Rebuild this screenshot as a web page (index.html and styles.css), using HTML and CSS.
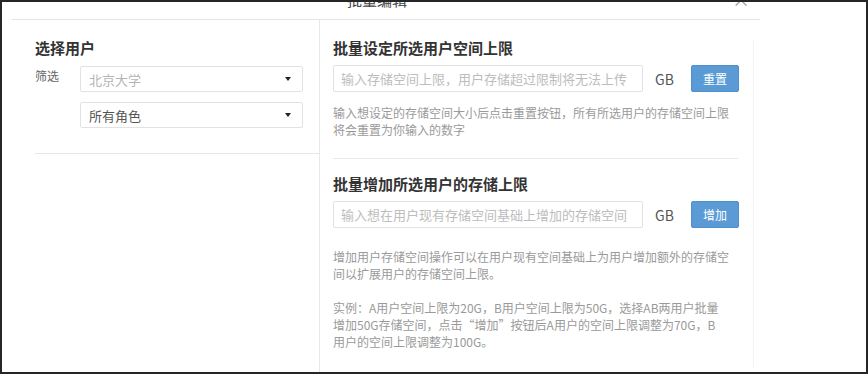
FILE: index.html
```html
<!DOCTYPE html>
<html lang="zh-CN">
<head>
<meta charset="utf-8">
<title>批量编辑</title>
<link rel="stylesheet" href="styles.css">
</head>
<body>
<div class="screen">
  <div class="modal">
    <div class="header">
      <span class="header-title">批量编辑</span>
      <span class="close">×</span>
    </div>
    <div class="body">
      <div class="left">
        <div class="sec-title">选择用户</div>
        <div class="filter">
          <span class="label">筛选</span>
          <div class="select placeholder"><span>北京大学</span><i class="caret"></i></div>
          <span></span>
          <div class="select"><span>所有角色</span><i class="caret"></i></div>
        </div>
        <div class="left-divider"></div>
      </div>
      <div class="right">
        <div class="sec-title">批量设定所选用户空间上限</div>
        <div class="row">
          <div class="input">输入存储空间上限，用户存储超过限制将无法上传</div>
          <span class="unit">GB</span>
          <span class="btn">重置</span>
        </div>
        <p class="desc first">输入想设定的存储空间大小后点击重置按钮，所有所选用户的存储空间上限<br>将会重置为你输入的数字</p>
        <div class="divider"></div>
        <div class="sec-title second">批量增加所选用户的存储上限</div>
        <div class="row">
          <div class="input">输入想在用户现有存储空间基础上增加的存储空间</div>
          <span class="unit">GB</span>
          <span class="btn">增加</span>
        </div>
        <p class="desc second-desc">增加用户存储空间操作可以在用户现有空间基础上为用户增加额外的存储空<br>间以扩展用户的存储空间上限。</p>
        <p class="desc example">实例：A用户空间上限为20G，B用户空间上限为50G，选择AB两用户批量<br>增加50G存储空间，点击“增加”按钮后A用户的空间上限调整为70G，B<br>用户的空间上限调整为100G。</p>
      </div>
    </div>
  </div>
</div>
</body>
</html>
```

FILE: styles.css
```css
html, body {
  margin: 0;
  padding: 0;
  background: #262626;
}

.screen {
  width: 868px;
  height: 374px;
  box-sizing: border-box;
  border: 2px solid #262626;
  background: #ffffff;
  overflow: hidden;
  font-family: "Noto Sans CJK SC", "Noto Sans", "Liberation Sans", sans-serif;
  color: #333;
}

.modal {
  margin-left: 10px;
  width: 748px;
  height: 100%;
}

.header {
  height: 17px;
  border-bottom: 1px solid #e4e4e4;
  display: flex;
  align-items: flex-end;
  overflow: hidden;
}

.header-title {
  margin-left: 335px;
  margin-bottom: 12px;
  font-size: 15px;
  line-height: 15px;
  color: #444;
  width: 60px;
  white-space: nowrap;
}

.close {
  margin-left: 325px;
  margin-bottom: 13px;
  font-size: 18px;
  line-height: 14px;
  color: #999;
}

.body {
  display: flex;
  height: 352px;
}

.left {
  width: 307px;
  border-right: 1px solid #e8e8e8;
  padding-top: 18px;
}

.sec-title {
  font-size: 15px;
  line-height: 20px;
  font-weight: bold;
  color: #333;
}

.left .sec-title {
  margin-left: 23px;
}

.filter {
  margin-left: 23px;
  margin-top: 8px;
  display: grid;
  grid-template-columns: 45px 223px;
  row-gap: 10px;
}

.label {
  font-size: 12px;
  line-height: 20px;
  color: #666;
}

.select {
  height: 26px;
  box-sizing: border-box;
  border: 1px solid #e2e2e2;
  border-radius: 2px;
  padding: 0 11px 0 8px;
  display: flex;
  align-items: center;
  justify-content: space-between;
  font-size: 13px;
  color: #555;
}

.select.placeholder {
  color: #b4b4b4;
}

.caret {
  width: 0;
  height: 0;
  border-left: 3.5px solid transparent;
  border-right: 3.5px solid transparent;
  border-top: 4px solid #222;
}

.left-divider {
  margin-top: 25px;
  margin-left: 23px;
  border-top: 1px solid #e6e6e6;
}

.right {
  flex: 1;
  padding-left: 13px;
  padding-top: 18px;
  position: relative;
}

.right::after {
  content: "";
  position: absolute;
  left: 433px;
  top: 20px;
  bottom: 4px;
  border-left: 1px solid #f3f3f3;
}

.row {
  display: flex;
  align-items: center;
  margin-top: 7px;
  height: 27px;
}

.input {
  width: 310px;
  height: 27px;
  box-sizing: border-box;
  border: 1px solid #e2e2e2;
  border-radius: 2px;
  padding-left: 7px;
  font-size: 13px;
  line-height: 25px;
  color: #bdbdbd;
  white-space: nowrap;
  overflow: hidden;
}

.unit {
  margin-left: 12px;
  width: 36px;
  font-size: 14px;
  color: #555;
}

.btn {
  width: 48px;
  height: 27px;
  box-sizing: border-box;
  background: #5a9bd6;
  border: 1px solid #4f8fcb;
  border-radius: 2px;
  color: #fff;
  font-size: 12px;
  line-height: 25px;
  text-align: center;
}

.desc {
  margin: 12px 0 0 0;
  font-size: 12px;
  line-height: 17px;
  color: #9a9a9a;
  white-space: nowrap;
}

.divider {
  margin-top: 20px;
  width: 405px;
  border-top: 1px solid #e8e8e8;
}

.sec-title.second {
  margin-top: 15px;
}

.desc.second-desc {
  margin-top: 20px;
}

.desc.example {
  margin-top: 17px;
}
```
